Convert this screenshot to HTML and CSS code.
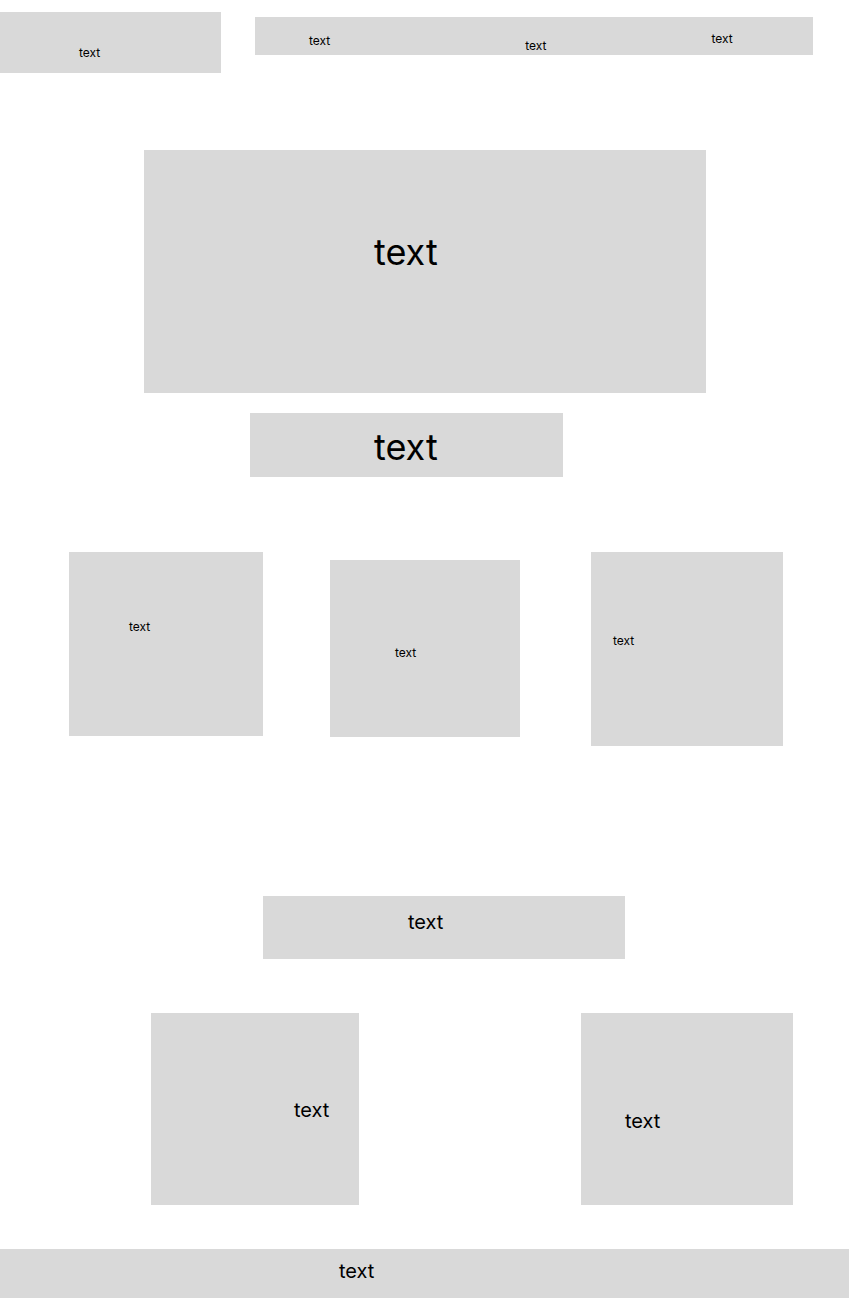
FILE: index.html
```html
<!DOCTYPE html>
<html lang="en">
<head>
<meta charset="utf-8">
<title>Wireframe</title>
<link rel="stylesheet" href="styles.css">
</head>
<body>
<div class="header">
	<div class="box logo"><span class="label sm">text</span></div>
	<div class="box nav">
		<span class="label sm nav-1">text</span>
		<span class="label sm nav-2">text</span>
		<span class="label sm nav-3">text</span>
	</div>
</div>

<div class="box hero"><span class="label lg">text</span></div>
<div class="box hero-btn"><span class="label lg">text</span></div>

<div class="cards">
	<div class="box card card-1"><span class="label sm">text</span></div>
	<div class="box card card-2"><span class="label sm">text</span></div>
	<div class="box card card-3"><span class="label sm">text</span></div>
</div>

<div class="box banner"><span class="label md">text</span></div>

<div class="pair">
	<div class="box pair-1"><span class="label md">text</span></div>
	<div class="box pair-2"><span class="label md">text</span></div>
</div>

<div class="box footer"><span class="label md">text</span></div>
</body>
</html>
```

FILE: styles.css
```css
body, div, span { margin: 0; padding: 0; }
body { font-family: Inter, "Liberation Sans", sans-serif; color: #000; background: #fff; width: 849px; }
.box { background: #d9d9d9; box-sizing: border-box; }
.label { display: block; line-height: 1; white-space: nowrap; }
.sm { font-size: 12px; }
.md { font-size: 20px; }
.lg { font-size: 36px; }

/* header */
.header { display: flex; align-items: flex-start; padding-top: 12px; }
.logo { width: 221px; height: 61px; padding: 35px 0 0 79px; }
.nav { display: flex; align-items: flex-start; width: 558px; height: 38px; margin: 5px 0 0 34px; padding-left: 54px; }
.nav-1 { margin-top: 18px; }
.nav-2 { margin: 23px 0 0 195px; }
.nav-3 { margin: 16px 0 0 165px; }

/* hero */
.hero { width: 562px; height: 243px; margin: 77px 0 0 144px; padding: 84px 0 0 230px; }
.hero-btn { width: 313px; height: 64px; margin: 20px 0 0 250px; padding: 16px 0 0 124px; }

/* cards */
.cards { display: flex; align-items: flex-start; margin-top: 75px; padding-left: 69px; }
.card-1 { width: 194px; height: 184px; padding: 69px 0 0 60px; }
.card-2 { width: 190px; height: 177px; margin: 8px 0 0 67px; padding: 87px 0 0 65px; }
.card-3 { width: 192px; height: 194px; margin-left: 71px; padding: 83px 0 0 22px; }

.banner { width: 362px; height: 63px; margin: 150px 0 0 263px; padding: 16px 0 0 145px; }

.pair { display: flex; margin-top: 54px; padding-left: 151px; }
.pair-1 { width: 208px; height: 192px; padding: 87px 0 0 143px; }
.pair-2 { width: 212px; height: 192px; margin-left: 222px; padding: 98px 0 0 44px; }

.footer { height: 49px; margin-top: 44px; padding: 12px 0 0 339px; }
```
